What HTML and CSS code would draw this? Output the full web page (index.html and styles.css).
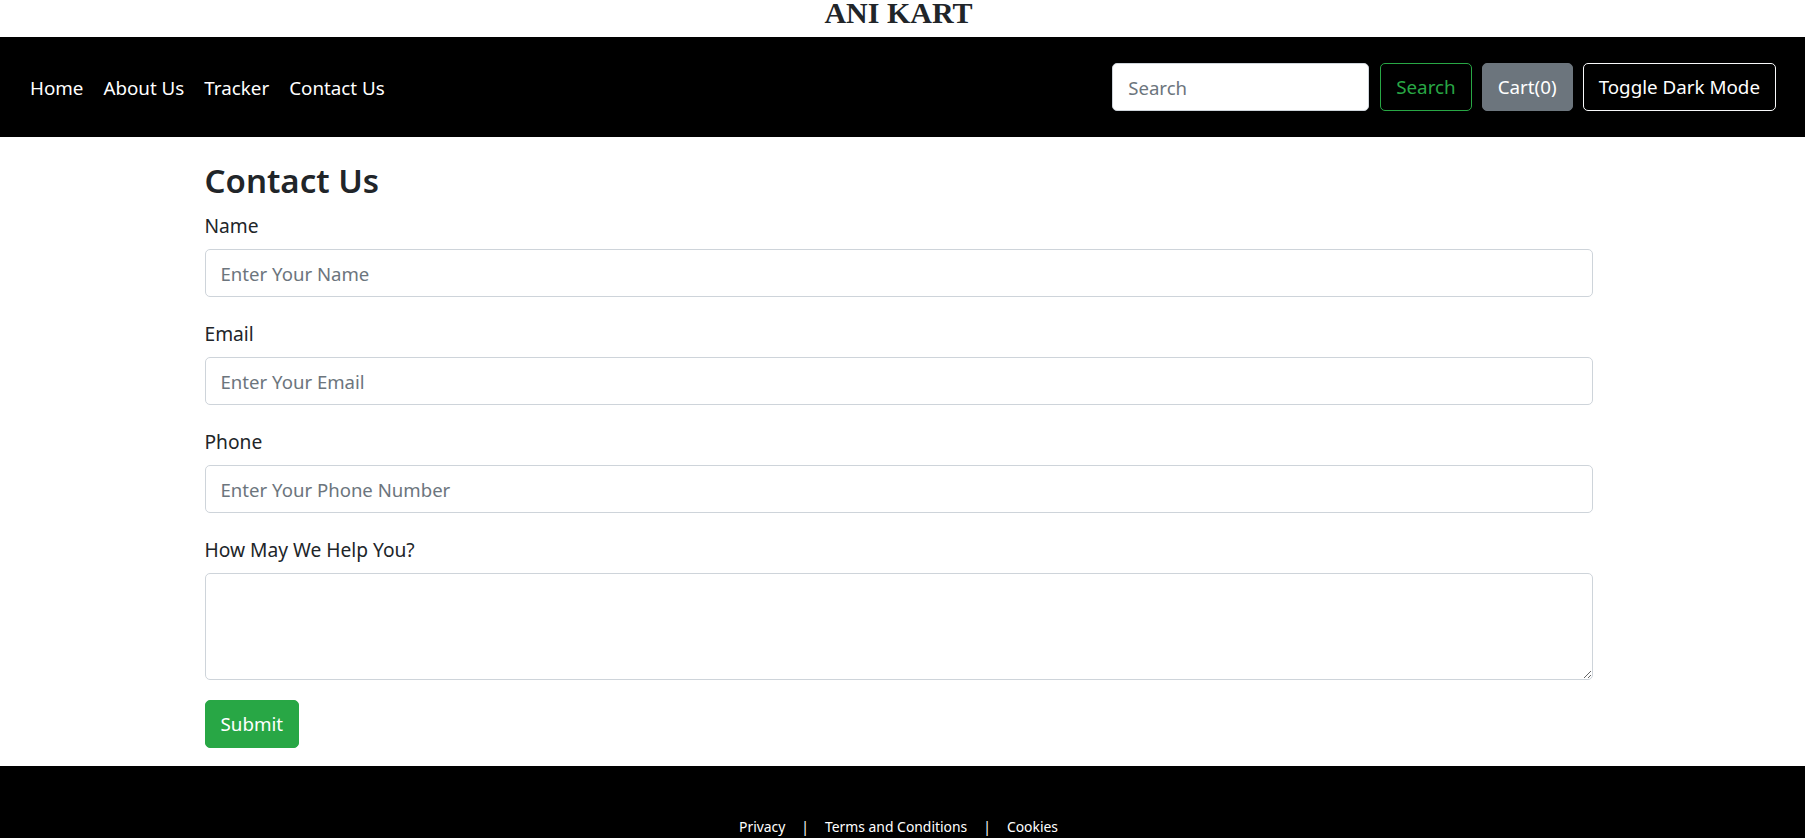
FILE: index.html
```html
<!DOCTYPE html>
<html lang="en">
<head>
<meta charset="utf-8">
<title>ANI KART - Contact Us</title>
<link rel="stylesheet" href="styles.css">
</head>
<body>
<h1 class="brand">ANI KART</h1>
<nav class="navbar">
  <ul class="nav-links">
    <li><a href="#">Home</a></li>
    <li><a href="#">About Us</a></li>
    <li><a href="#">Tracker</a></li>
    <li><a href="#">Contact Us</a></li>
  </ul>
  <form class="nav-form">
    <input class="nav-search" type="search" placeholder="Search">
    <button class="btn btn-outline-success" type="button">Search</button>
    <button class="btn btn-secondary" type="button">Cart(0)</button>
    <button class="btn btn-outline-light" type="button">Toggle Dark Mode</button>
  </form>
</nav>
<main class="container">
  <h2 class="page-title">Contact Us</h2>
  <form class="contact-form">
    <div class="form-group">
      <label for="name">Name</label>
      <input class="form-control" id="name" type="text" placeholder="Enter Your Name">
    </div>
    <div class="form-group">
      <label for="email">Email</label>
      <input class="form-control" id="email" type="email" placeholder="Enter Your Email">
    </div>
    <div class="form-group">
      <label for="phone">Phone</label>
      <input class="form-control" id="phone" type="tel" placeholder="Enter Your Phone Number">
    </div>
    <div class="form-group">
      <label for="desc">How May We Help You?</label>
      <textarea class="form-control textarea" id="desc" rows="3"></textarea>
    </div>
    <button class="btn btn-success" type="button">Submit</button>
  </form>
</main>
<footer class="footer">
  <p class="footer-links"><a href="#">Privacy</a><span class="sep">|</span><a href="#">Terms and Conditions</a><span class="sep">|</span><a href="#">Cookies</a></p>
</footer>
</body>
</html>
```
FILE: styles.css
```css
* { box-sizing: border-box; }
html, body { margin: 0; padding: 0; }
body {
  font-family: "Noto Sans", "Open Sans", sans-serif;
  font-size: 20px;
  line-height: 1.5;
  color: #212529;
  background: #fff;
}
a { text-decoration: none; color: inherit; }

.brand {
  margin: 0;
  height: 37px;
  font-family: "Liberation Serif", serif;
  font-weight: bold;
  font-size: 30px;
  line-height: 25px;
  text-align: center;
  padding-right: 8px;
  color: #212529;
}

.navbar {
  background: #000;
  height: 100px;
  display: flex;
  align-items: center;
  justify-content: space-between;
  padding: 0 29px 0 20px;
}
.nav-links {
  list-style: none;
  margin: 0;
  padding: 2px 0 0;
  display: flex;
}
.nav-links a {
  display: block;
  padding: 10px;
  color: #fff;
  font-size: 18.8px;
}
.nav-form {
  display: flex;
  align-items: center;
  gap: 10px;
  margin: 0;
}
.nav-search {
  width: 257px;
  height: 48px;
  border: 1px solid #ced4da;
  border-radius: 5px;
  padding: 6px 15px;
  font: inherit;
  font-size: 18.6px;
  color: #495057;
  background: #fff;
  margin-right: 1px;
}
.nav-search::placeholder { color: #6c757d; }

.btn {
  height: 48px;
  padding: 0 15px;
  font: inherit;
  font-size: 18.8px;
  border: 1px solid transparent;
  border-radius: 5px;
  cursor: pointer;
  background: transparent;
  line-height: 1.5;
}
.btn-outline-success { color: #28a745; border-color: #28a745; }
.btn-secondary { color: #fff; background: #6c757d; border-color: #6c757d; }
.btn-outline-light { color: #fff; border-color: #f8f9fa; }
.btn-success { color: #fff; background: #28a745; border-color: #28a745; }

.container {
  width: 1388px;
  margin-left: calc(50% - 698px);
  padding-top: 14px;
  padding-bottom: 18px;
}
.page-title {
  margin: 0 0 4px;
  padding-top: 6px;
  font-size: 33px;
  font-weight: 600;
  line-height: 48px;
}
.contact-form { margin: 0; }
.form-group { margin-bottom: 20px; }
.form-group label {
  display: block;
  margin-bottom: 10px;
  line-height: 30px;
  font-size: 19.2px;
  padding-top: 2px;
  height: 30px;
}
.form-control {
  display: block;
  width: 100%;
  height: 48px;
  padding: 7px 15px;
  font: inherit;
  font-size: 18.6px;
  color: #495057;
  background: #fff;
  border: 1px solid #ced4da;
  border-radius: 5px;
}
.form-control::placeholder { color: #6c757d; }
.textarea { height: 107px; resize: vertical; }

.footer {
  background: #000;
  height: 100px;
  padding-top: 49px;
  text-align: center;
}
.footer-links {
  margin: 0;
  padding-right: 8px;
  color: #fff;
  font-size: 13.9px;
  line-height: 24px;
}
.sep { margin: 0 16px; }
```
